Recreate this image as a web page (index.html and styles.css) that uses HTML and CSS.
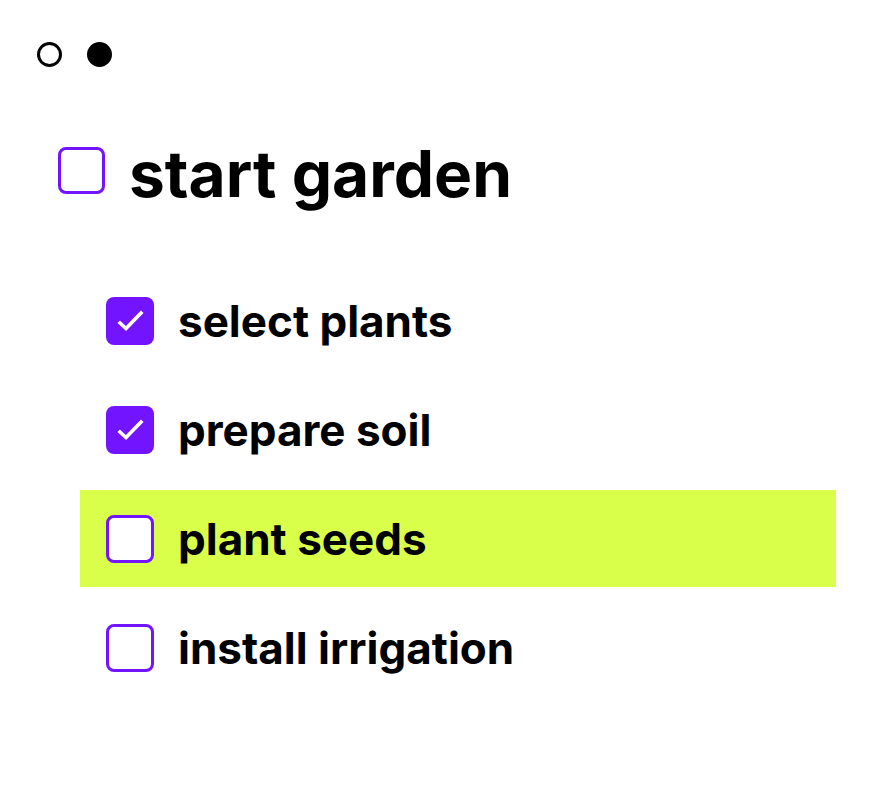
FILE: index.html
```html
<!DOCTYPE html>
<html lang="en">
<head>
<meta charset="utf-8">
<title>start garden</title>
<link rel="stylesheet" href="styles.css">
</head>
<body>
<div class="toggles">
  <span class="dot"></span>
  <span class="dot filled"></span>
</div>
<div class="title">
  <span class="box"></span>
  <h1 class="title-text">start garden</h1>
</div>
<ul class="list">
  <li class="row">
    <span class="box checked"><svg viewBox="0 0 48 48" width="48" height="48"><path d="M14 26 L20 31.5 L35 16" fill="none" stroke="#fff" stroke-width="3.6" stroke-linecap="square"/></svg></span>
    <span class="label">select plants</span>
  </li>
  <li class="row">
    <span class="box checked"><svg viewBox="0 0 48 48" width="48" height="48"><path d="M14 26 L20 31.5 L35 16" fill="none" stroke="#fff" stroke-width="3.6" stroke-linecap="square"/></svg></span>
    <span class="label">prepare soil</span>
  </li>
  <li class="row active">
    <span class="box"></span>
    <span class="label">plant seeds</span>
  </li>
  <li class="row">
    <span class="box"></span>
    <span class="label">install irrigation</span>
  </li>
</ul>
</body>
</html>
```
FILE: styles.css
```css
html, body {
  margin: 0;
  padding: 0;
  background: #fff;
  color: #000;
  font-family: Inter, "Noto Sans", sans-serif;
}
.toggles {
  display: flex;
  gap: 25px;
  padding: 42px 0 0 37px;
}
.dot {
  width: 25px;
  height: 25px;
  box-sizing: border-box;
  border-radius: 50%;
  border: 3px solid #000;
}
.dot.filled {
  background: #000;
}
.title {
  display: flex;
  align-items: center;
  gap: 24px;
  margin: 80px 0 0 58px;
  height: 47px;
}
.title-text {
  margin: 0;
  font-size: 64px;
  font-weight: 700;
  line-height: 47px;
  position: relative;
  top: 3px;
}
.box {
  flex: none;
  width: 48px;
  height: 48px;
  box-sizing: border-box;
  border: 3px solid #7214ff;
  border-radius: 8px;
  background: #fff;
  display: flex;
}
.title .box {
  width: 47px;
  height: 47px;
}
.box.checked {
  background: #7214ff;
  border: none;
}
.list {
  list-style: none;
  margin: 78px 0 0 80px;
  padding: 0;
  width: 756px;
  display: flex;
  flex-direction: column;
  gap: 12px;
}
.row {
  height: 97px;
  box-sizing: border-box;
  padding-left: 26px;
  display: flex;
  align-items: center;
  gap: 24px;
}
.row.active {
  background: #d9ff4a;
}
.label {
  font-size: 44px;
  font-weight: 700;
  line-height: 48px;
}
```
